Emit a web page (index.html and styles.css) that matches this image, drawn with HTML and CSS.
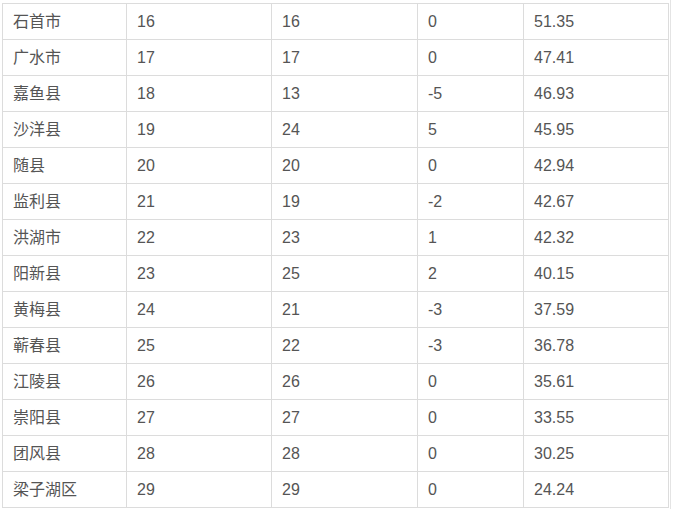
FILE: index.html
```html
<!DOCTYPE html>
<html lang="zh">
<head>
<meta charset="utf-8">
<link rel="stylesheet" href="styles.css">
</head>
<body>
<div class="wrap">
<table class="rank">
<colgroup><col class="c1"><col class="c2"><col class="c3"><col class="c4"><col class="c5"></colgroup>
<tbody>
<tr><td>石首市</td><td>16</td><td>16</td><td>0</td><td>51.35</td></tr>
<tr><td>广水市</td><td>17</td><td>17</td><td>0</td><td>47.41</td></tr>
<tr><td>嘉鱼县</td><td>18</td><td>13</td><td>-5</td><td>46.93</td></tr>
<tr><td>沙洋县</td><td>19</td><td>24</td><td>5</td><td>45.95</td></tr>
<tr><td>随县</td><td>20</td><td>20</td><td>0</td><td>42.94</td></tr>
<tr><td>监利县</td><td>21</td><td>19</td><td>-2</td><td>42.67</td></tr>
<tr><td>洪湖市</td><td>22</td><td>23</td><td>1</td><td>42.32</td></tr>
<tr><td>阳新县</td><td>23</td><td>25</td><td>2</td><td>40.15</td></tr>
<tr><td>黄梅县</td><td>24</td><td>21</td><td>-3</td><td>37.59</td></tr>
<tr><td>蕲春县</td><td>25</td><td>22</td><td>-3</td><td>36.78</td></tr>
<tr><td>江陵县</td><td>26</td><td>26</td><td>0</td><td>35.61</td></tr>
<tr><td>崇阳县</td><td>27</td><td>27</td><td>0</td><td>33.55</td></tr>
<tr><td>团风县</td><td>28</td><td>28</td><td>0</td><td>30.25</td></tr>
<tr><td>梁子湖区</td><td>29</td><td>29</td><td>0</td><td>24.24</td></tr>
</tbody>
</table>
</div>
</body>
</html>
```
FILE: styles.css
```css
html, body {
  margin: 0;
  padding: 0;
  background: #fff;
}
.wrap {
  width: 668px;
  min-height: 506px;
  padding: 3px 0 0 2px;
  border-right: 1px solid #e4e4e4;
  box-sizing: content-box;
}
.rank {
  border-collapse: collapse;
  width: 666px;
  table-layout: fixed;
  font-family: "Liberation Sans", "Noto Sans CJK SC", sans-serif;
  font-size: 16px;
  color: #555;
}
.c1 { width: 124px; }
.c2 { width: 145px; }
.c3 { width: 146px; }
.c4 { width: 106px; }
.c5 { width: 145px; }
.rank td {
  border: 1px solid #dcdcdc;
  height: 36px;
  padding: 0 10px;
  box-sizing: border-box;
  vertical-align: middle;
  line-height: 20px;
  white-space: nowrap;
}
```
